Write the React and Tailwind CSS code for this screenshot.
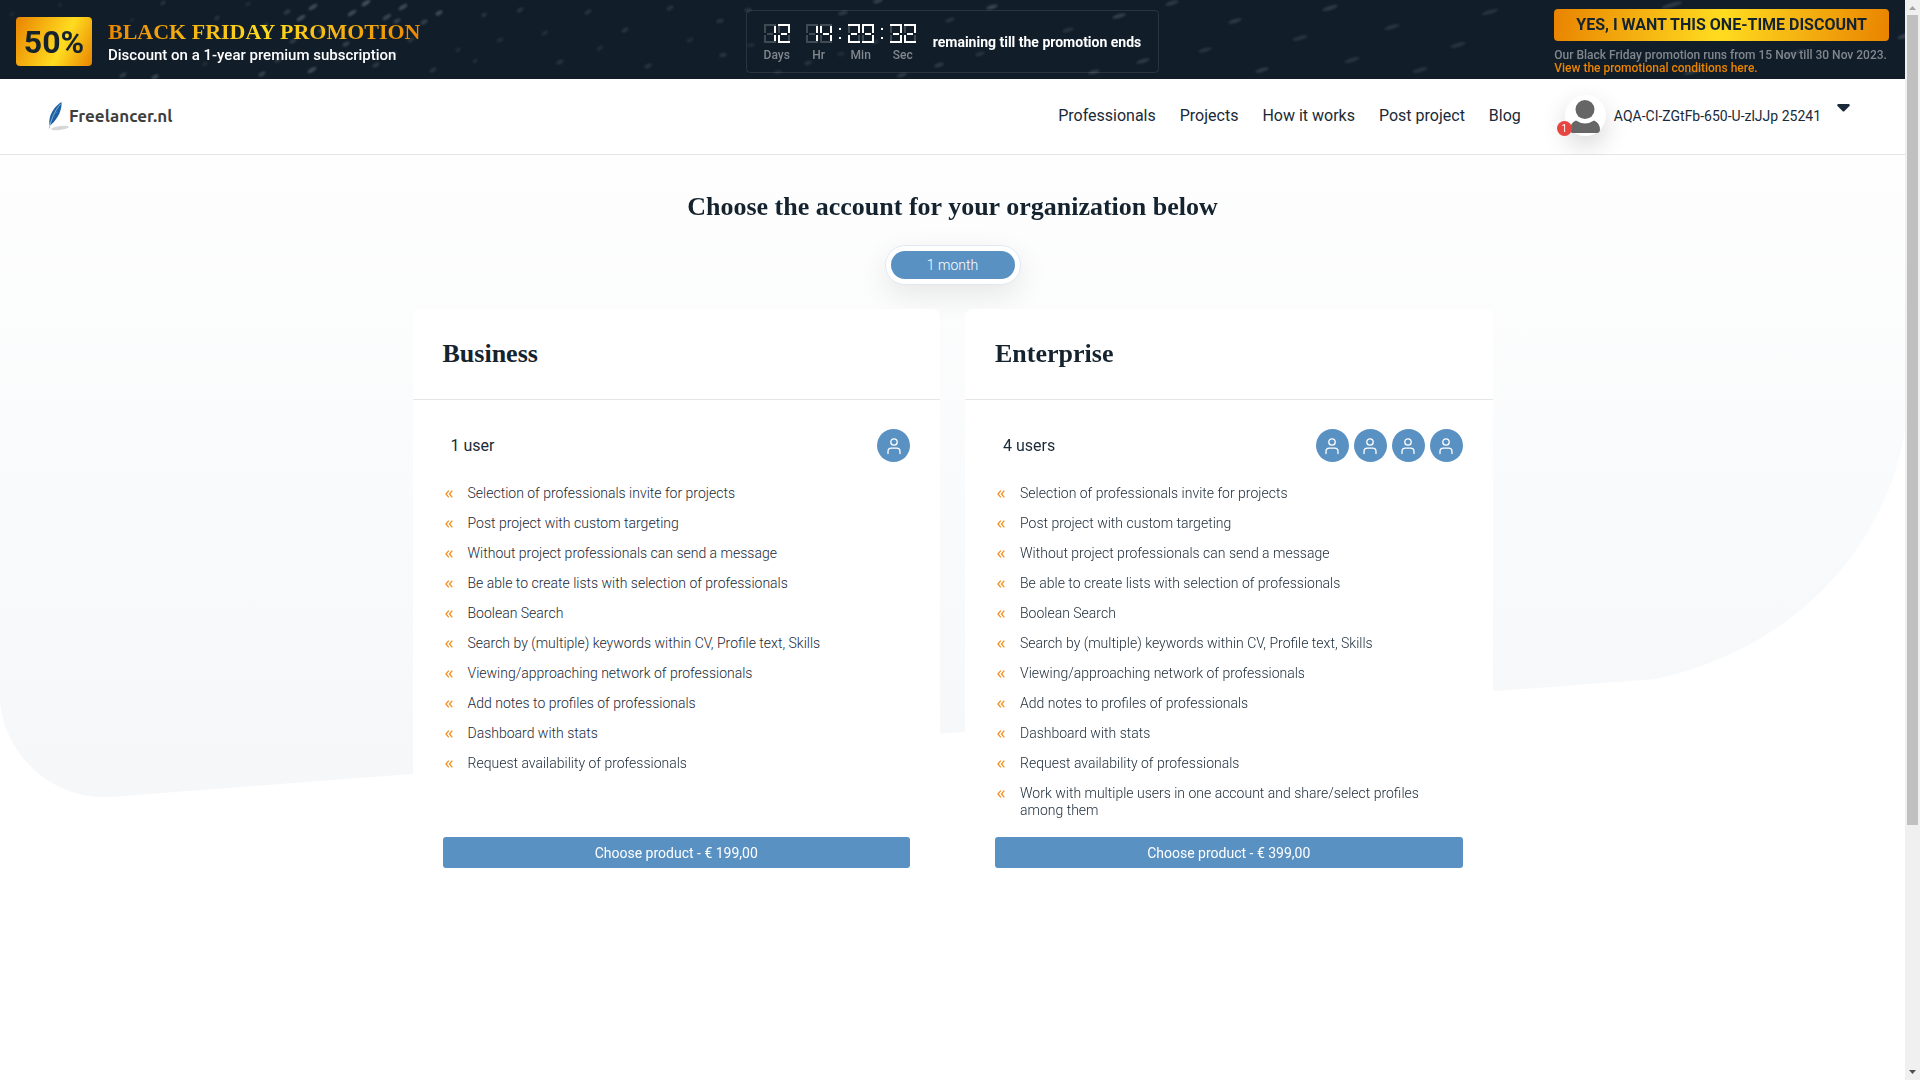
import React from "react";

const NAV = ["Professionals", "Projects", "How it works", "Post project", "Blog"];

const FEATURES = [
  "Selection of professionals invite for projects",
  "Post project with custom targeting",
  "Without project professionals can send a message",
  "Be able to create lists with selection of professionals",
  "Boolean Search",
  "Search by (multiple) keywords within CV, Profile text, Skills",
  "Viewing/approaching network of professionals",
  "Add notes to profiles of professionals",
  "Dashboard with stats",
  "Request availability of professionals",
];

const PLANS = [
  { name: "Business", users: 1, label: "1 user", price: "199,00", features: FEATURES },
  {
    name: "Enterprise",
    users: 4,
    label: "4 users",
    price: "399,00",
    features: [...FEATURES, "Work with multiple users in one account and share/select profiles among them"],
  },
];

/* Light specks in the banner: x, y, half length, opacity */
const SPECKS = [
  [12, 14, 3, 0.12], [60, 5, 3, 0.1], [132, 20, 3, 0.1], [135, 59, 3, 0.12], [123, 75, 4, 0.25], [155, 77, 4, 0.35],
  [163, 3, 3, 0.2], [205, 64, 3, 0.15], [217, 18, 3, 0.2], [224, 37, 3, 0.2], [248, 4, 3, 0.15], [262, 74, 4, 0.3],
  [266, 25, 3, 0.2], [278, 60, 4, 0.25], [287, 12, 4, 0.25], [293, 41, 4, 0.25], [301, 18, 5, 0.4], [313, 7, 5, 0.4],
  [312, 70, 5, 0.4], [322, 30, 4, 0.35], [335, 55, 4, 0.25], [346, 44, 4, 0.3], [352, 13, 5, 0.4], [366, 3, 5, 0.45],
  [376, 65, 4, 0.25], [387, 17, 5, 0.35], [393, 54, 4, 0.25], [397, 21, 4, 0.3], [403, 7, 5, 0.4], [411, 40, 4, 0.2],
  [424, 22, 4, 0.3], [439, 13, 4, 0.4], [433, 70, 4, 0.2], [458, 50, 3, 0.15], [475, 61, 3, 0.15], [484, 15, 3, 0.2],
  [500, 40, 4, 0.15], [520, 10, 4, 0.2], [545, 33, 4, 0.15], [560, 62, 4, 0.2], [588, 12, 4, 0.2], [600, 48, 4, 0.15],
  [625, 30, 4, 0.2], [648, 66, 4, 0.2], [670, 8, 4, 0.2], [690, 40, 4, 0.15], [720, 21, 4, 0.2], [723, 55, 4, 0.2],
  [748, 10, 4, 0.2], [751, 45, 4, 0.15], [778, 72, 4, 0.15], [808, 63, 4, 0.2], [841, 54, 4, 0.15], [843, 13, 5, 0.25],
  [878, 1, 5, 0.3], [875, 42, 4, 0.2], [902, 75, 5, 0.25], [939, 65, 5, 0.25], [950, 20, 5, 0.2], [980, 54, 5, 0.2],
  [992, 7, 6, 0.35], [1068, 30, 6, 0.2], [1094, 72, 6, 0.25], [1119, 16, 7, 0.3], [1143, 61, 7, 0.25], [1172, 3, 7, 0.25],
  [1205, 50, 7, 0.2], [1235, 21, 7, 0.25], [1262, 70, 7, 0.25], [1300, 38, 8, 0.2], [1330, 8, 8, 0.25], [1352, 60, 8, 0.2],
  [1392, 27, 8, 0.2], [1420, 70, 8, 0.2], [1458, 45, 8, 0.2], [1490, 12, 9, 0.2], [1672, 5, 11, 0.25], [1695, 71, 12, 0.25],
  [1795, 53, 12, 0.2], [1905, 36, 8, 0.3],
];

/* Lit segments per digit: top, upper left, upper right, middle, lower left, lower right, bottom */
const SEGMENTS = {
  1: [0, 0, 1, 0, 0, 1, 0],
  2: [1, 0, 1, 1, 1, 0, 1],
  3: [1, 0, 1, 1, 0, 1, 1],
  4: [0, 1, 1, 1, 0, 1, 0],
  9: [1, 1, 1, 1, 0, 1, 1],
};

function Digit({ value }) {
  const s = SEGMENTS[value];
  const lit = (on) => (on ? "bg-white" : "bg-white/20");
  return (
    <span className="grid h-[19px] w-3 grid-cols-[2px_1fr_2px] grid-rows-[2px_1fr_2px_1fr_2px] gap-x-px">
      <span className={`col-span-3 ${lit(s[0])}`} />
      <span className={lit(s[1])} />
      <span />
      <span className={lit(s[2])} />
      <span />
      <span className={lit(s[3])} />
      <span />
      <span className={lit(s[4])} />
      <span />
      <span className={lit(s[5])} />
      <span className={`col-span-3 ${lit(s[6])}`} />
    </span>
  );
}

function Unit({ value, label }) {
  return (
    <div className="flex w-[26px] flex-col items-center">
      <span role="img" aria-label={value} className="flex gap-[2px]">
        {value.split("").map((d, i) => (
          <Digit key={i} value={d} />
        ))}
      </span>
      <span className="mt-1 text-xs font-medium leading-4 text-[#81878d]">{label}</span>
    </div>
  );
}

function Colon({ hidden }) {
  return (
    <span aria-hidden="true" className={`flex h-[19px] w-4 flex-col items-center justify-center gap-[7px] ${hidden ? "invisible" : ""}`}>
      <span className="size-[2px] bg-white" />
      <span className="size-[2px] bg-white" />
    </span>
  );
}

function Banner() {
  return (
    <section className="relative flex h-[79px] items-center justify-between overflow-hidden bg-[#111d29] px-4 pt-1">
      <svg aria-hidden="true" className="absolute inset-0 h-full w-full" viewBox="0 0 1905 79" preserveAspectRatio="xMidYMid slice">
        <defs>
          <filter id="soft" x="-5%" y="-20%" width="110%" height="140%">
            <feGaussianBlur stdDeviation="1.2" />
          </filter>
        </defs>
        <g fill="#aab6c2" filter="url(#soft)" opacity="0.75">
          {SPECKS.map(([x, y, r, o], i) => (
            <ellipse key={i} cx={x} cy={y} rx={r} ry="2" opacity={o} transform={`rotate(${x < 700 ? -32 : -16} ${x} ${y})`} />
          ))}
        </g>
      </svg>
      <div className="relative flex flex-1 items-center gap-4">
        <div className="flex h-[49px] w-[76px] items-center justify-center rounded bg-[linear-gradient(116deg,#e98300,#ffdc20_60%,#e98300)] text-[32px] font-bold leading-none text-[#15232f]">
          50%
        </div>
        <div>
          <h2 className="w-fit bg-[linear-gradient(116deg,#e98300,#ffdc20_50%,#e98300)] bg-clip-text font-['Roboto_Slab','Liberation_Serif',serif] text-[22px] font-bold leading-[26px] text-transparent">
            BLACK FRIDAY PROMOTION
          </h2>
          <p className="text-[15px] font-medium leading-5 text-white">Discount on a 1-year premium subscription</p>
        </div>
      </div>
      <div className="relative flex h-[63px] items-center rounded border border-white/10 px-[17px]">
        <div role="timer" className="flex pt-1">
          <Unit value="12" label="Days" />
          <Colon hidden />
          <Unit value="14" label="Hr" />
          <Colon />
          <Unit value="29" label="Min" />
          <Colon />
          <Unit value="32" label="Sec" />
        </div>
        <span className="ml-[17px] text-sm font-bold text-white">remaining till the promotion ends</span>
      </div>
      <div className="relative flex flex-1 justify-end">
        <div className="flex flex-col">
          <button className="mb-2 h-8 w-full rounded bg-[linear-gradient(100deg,#e98300,#ffdc20_50%,#e98300)] px-[22px] text-base font-bold text-[#15232f]">
            YES, I WANT THIS ONE-TIME DISCOUNT
          </button>
          <p className="text-xs font-medium leading-[13px] text-[#81878d]">
            Our Black Friday promotion runs from 15 Nov till 30 Nov 2023.
          </p>
          <a href="#conditions" className="text-xs font-medium leading-[13px] text-[#e98300]">
            View the promotional conditions here.
          </a>
        </div>
      </div>
    </section>
  );
}

function Logo() {
  return (
    <a href="#home" className="flex items-center">
      <svg aria-hidden="true" width="21" height="30" viewBox="0 0 21 30">
        <ellipse cx="12" cy="27" rx="9" ry="2" fill="#d6d7d8" transform="rotate(-8 12 27)" />
        <path d="M13.500 1C7.500 4.500 1.500 12.500 1.300 20.500L1.500 24.500C6.500 22 14.500 11 13.500 1Z" fill="#1a5fa0" />
        <path d="M12.500 3C7 10 3.500 17 1.200 27.500" fill="none" stroke="#8fbbe0" strokeWidth="0.900" />
        <path d="M6 8.500l2 1.500M4.500 14l2 1M9.500 11l-2 1" stroke="#4d8cc4" strokeWidth="0.700" />
      </svg>
      <span className="font-['Ubuntu','Noto_Sans',sans-serif] text-[17px] font-bold leading-6 text-[#3f3f3f]">Freelancer.nl</span>
    </a>
  );
}

function Header() {
  return (
    <header className="flex h-[76px] items-center justify-between border-b border-[#e4e6e8] bg-white pb-[2px] pl-12 pr-[55px]">
      <Logo />
      <div className="flex items-center">
        <nav className="flex gap-6">
          {NAV.map((item) => (
            <a key={item} href="#nav" className="text-base leading-6 text-[#1a2a38]">
              {item}
            </a>
          ))}
        </nav>
        <button className="ml-[44px] flex items-center text-sm text-[#1a2a38]">
          <span className="relative flex size-[41px] items-center justify-center rounded-full bg-white shadow-[0_10px_26px_rgba(0,0,0,0.16)]">
            <svg aria-hidden="true" width="32" height="34" viewBox="0 0 32 34" fill="#666">
              <circle cx="16" cy="10.500" r="9.500" />
              <path d="M7 21.500Q16 27.500 25 21.500Q31 24 31 31Q30.500 34 28 34H4Q1 34 1 31Q1 24 7 21.500Z" />
            </svg>
            <span className="absolute -left-2 bottom-0 flex size-[15px] items-center justify-center rounded-full bg-[#e8453f] text-[10px] leading-none text-white">
              1
            </span>
          </span>
          <span className="ml-2">AQA-CI-ZGtFb-650-U-zlJJp 25241</span>
          <svg aria-hidden="true" className="mb-4 ml-4" width="13" height="8" viewBox="0 0 13 8" fill="#1a2a38">
            <path d="M1 0H12Q13.500 1 12 2.500L7.500 7Q6.500 8 5.500 7L1 2.500Q-0.500 1 1 0Z" />
          </svg>
        </button>
      </div>
    </header>
  );
}

function UserBadge() {
  return (
    <span className="flex size-[33px] items-center justify-center rounded-full bg-[#5a91c3]">
      <svg aria-hidden="true" width="16" height="18" viewBox="0 0 16 18" fill="none" stroke="#fff" strokeWidth="1.300" strokeLinecap="round">
        <circle cx="8" cy="5" r="3.200" />
        <path d="M2 16.500V14.500Q2 11.200 5.300 11.200H10.700Q14 11.200 14 14.500V16.500" />
      </svg>
    </span>
  );
}

function PlanCard({ plan }) {
  return (
    <article className="flex flex-1 flex-col rounded-[8px] bg-white">
      <h2 className="border-b border-[#e4e6e8] px-[30px] py-[29px] font-['Roboto_Slab','Liberation_Serif',serif] text-[26px] font-bold leading-8 text-[#15232f]">
        {plan.name}
      </h2>
      <div className="flex flex-1 flex-col px-[30px] py-[29px]">
        <div className="flex items-center justify-between pl-2">
          <span className="text-base text-[#1a2a38]">{plan.label}</span>
          <span className="flex gap-[5px]">
            {Array.from({ length: plan.users }, (_, i) => (
              <UserBadge key={i} />
            ))}
          </span>
        </div>
        <ul className="mb-[18px] mt-[23px] flex flex-col gap-[13px]">
          {plan.features.map((text) => (
            <li key={text} className="flex gap-[15px] pl-[2px] text-sm font-light leading-[17px] text-[#1a2a38]">
              <svg aria-hidden="true" className="mt-[5px] shrink-0" width="8" height="8" viewBox="0 0 8 8" fill="none" stroke="#f0901e" strokeWidth="1.300">
                <path d="M3.800 0.700L1 4L3.800 7.300M7.300 0.700L4.500 4L7.300 7.300" />
              </svg>
              {text}
            </li>
          ))}
        </ul>
        <button className="mt-auto h-[31px] rounded-[3px] bg-[#5a91c3] text-sm text-white">Choose product - € {plan.price}</button>
      </div>
    </article>
  );
}

function Scrollbar() {
  return (
    <div aria-hidden="true" className="flex w-[15px] shrink-0 flex-col items-center justify-between bg-[#f0f0f0]">
      <svg width="15" height="15" viewBox="0 0 15 15" fill="#a3a3a3">
        <path d="M4 10H11L7.500 6Z" />
      </svg>
      <span className="mb-auto h-[75%] w-[11px] bg-[#c0c0c0]" />
      <svg width="15" height="15" viewBox="0 0 15 15" fill="#505050">
        <path d="M4 5H11L7.500 9Z" />
      </svg>
    </div>
  );
}

export default function App() {
  return (
    <div className="flex min-h-screen bg-white font-['Roboto',sans-serif]">
      <div className="min-w-0 flex-1">
        <Banner />
        <Header />
        <main className="relative flex flex-col items-center pb-8 pt-[36px]">
          <svg aria-hidden="true" className="absolute left-0 top-0 w-full" viewBox="0 0 1905 645">
            <defs>
              <linearGradient id="haze" x1="0" y1="0" x2="0" y2="1">
                <stop offset="0" stopColor="#fefefe" />
                <stop offset="1" stopColor="#f5f7f9" />
              </linearGradient>
            </defs>
            <path d="M0 0H1905V275C1885 400 1785 497 1655 524L110 642C45 645 0 591 0 541Z" fill="url(#haze)" />
          </svg>
          <h1 className="relative font-['Roboto_Slab','Liberation_Serif',serif] text-[26px] font-bold leading-8 text-[#15232f]">
            Choose the account for your organization below
          </h1>
          <div className="relative mt-[22px] rounded-full border border-[#dfe9f3] bg-white p-[5px] shadow-[0_10px_30px_rgba(0,0,0,0.09)]">
            <button className="h-7 w-[124px] rounded-full bg-[#5a91c3] text-sm font-light text-white">1 month</button>
          </div>
          <div className="relative mt-6 flex w-full max-w-[1080px] gap-[25px]">
            {PLANS.map((plan) => (
              <PlanCard key={plan.name} plan={plan} />
            ))}
          </div>
        </main>
      </div>
      <Scrollbar />
    </div>
  );
}
